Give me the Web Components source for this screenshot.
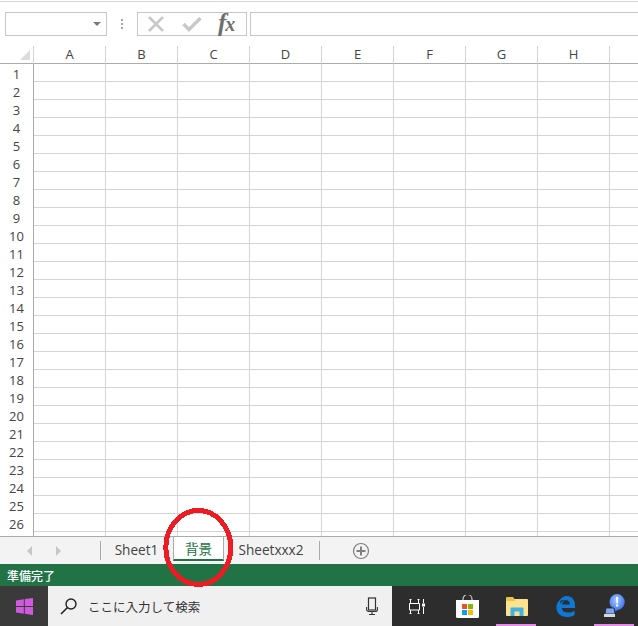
<!DOCTYPE html>
<html lang="ja"><head><meta charset="utf-8"><title>Sheet</title>
<style>html,body{margin:0;padding:0;background:#fff;overflow:hidden}</style></head>
<body>
<x-app>
  <x-formula-bar></x-formula-bar>
  <x-sheet rows="27" cols="ABCDEFGH"></x-sheet>
  <x-tabs>
    <x-tab slot="tabs" style="width:72px">Sheet1</x-tab>
    <x-tab slot="tabs" active style="width:51px">背景</x-tab>
    <x-tab slot="tabs" style="width:95px">Sheetxxx2</x-tab>
  </x-tabs>
  <x-status>準備完了</x-status>
  <x-taskbar></x-taskbar>
</x-app>
<script>
const FONT='"Open Sans","Noto Sans","Noto Sans CJK JP",sans-serif';
class Base extends HTMLElement{
  constructor(){super();this.attachShadow({mode:'open'});}
}
customElements.define('x-app',class extends Base{
  connectedCallback(){this.shadowRoot.innerHTML=`<style>
  :host{display:flex;flex-direction:column;position:relative;width:638px;height:626px;overflow:hidden;font-family:${FONT};color:#444}
  svg{position:absolute;left:160px;top:504px;width:76px;height:86px}
  </style><slot></slot>
  <svg viewBox="0 0 76 86" shape-rendering="crispEdges"><ellipse cx="38.3" cy="43.5" rx="32.500" ry="37" fill="none" stroke="#ed1c24" stroke-width="5"/></svg>`;}
});
customElements.define('x-formula-bar',class extends Base{
  connectedCallback(){this.shadowRoot.innerHTML=`<style>
  :host{display:flex;box-sizing:border-box;height:46px;flex:none;background:#fff;position:relative;padding:12px 0 0 5px;align-items:flex-start}
  .line{position:absolute;left:0;right:0;top:1px;height:1px;background:#d6d6d6}
  .box{box-sizing:border-box;height:24px;border:1px solid #c6c6c6;background:#fff;flex:none}
  .name{width:102px;display:flex;align-items:center;justify-content:flex-end;padding-right:5px}
  .dots{width:30px;height:24px;display:flex;flex-direction:column;align-items:center;justify-content:center;gap:2px;flex:none}
  .dots i{width:2px;height:2px;background:#a6a6a6;display:block}
  .btns{width:110px;display:flex;align-items:center;position:relative}
  .fx{position:absolute;left:80px;top:-4px;font:italic bold 25px/28px "Liberation Serif",serif;color:#6e6e6e;letter-spacing:-1px}
  .fx b{font-size:20px}
  .input{flex:1;margin-left:3px;border-right:none}
  svg{display:block;flex:none}
  </style><div class="line"></div>
  <div class="box name"><svg width="8" height="4"><path d="M0 0h8L4 4z" fill="#7a7a7a"/></svg></div>
  <div class="dots"><i></i><i></i><i></i></div>
  <div class="box btns">
    <svg style="margin-left:9px" width="18" height="16" viewBox="0 0 18 16"><path d="M2 1l14 14M16 1L2 15" stroke="#c8c8c8" stroke-width="2.600" fill="none"/></svg>
    <svg style="margin-left:17px" width="20" height="16" viewBox="0 0 20 16"><path d="M1.500 8l5.500 5.500L18.500 2" stroke="#c8c8c8" stroke-width="3.400" fill="none"/></svg>
    <span class="fx">f<b>x</b></span>
  </div>
  <div class="box input"></div>`;}
});
customElements.define('x-sheet',class extends Base{
  connectedCallback(){
    const cols=this.getAttribute('cols').split(''),rows=+this.getAttribute('rows');
    let h=`<div class="corner"><svg width="10" height="10"><path d="M10 0v10H0z" fill="#dcdcdc"/></svg></div>`;
    for(const c of cols)h+=`<div class="ch">${c}</div>`;
    h+=`<div class="ch"></div>`;
    for(let r=1;r<=rows;r++){
      h+=`<div class="rh">${r<27?r:''}</div>`;
      for(let i=0;i<=cols.length;i++)h+=`<div class="c"></div>`;
    }
    this.shadowRoot.innerHTML=`<style>
    :host{display:block;height:490px;flex:none;overflow:hidden;background:#fff}
    .g{display:grid;grid-template-columns:34px repeat(9,72px);grid-template-rows:18px repeat(27,18px);width:682px}
    .corner{display:flex;align-items:flex-end;justify-content:flex-end;padding:0 3px 3px 0;box-sizing:border-box;border-bottom:1px solid #ababab;border-right:1px solid #d4d4d4}
    .ch{box-sizing:border-box;border-right:1px solid #d4d4d4;border-bottom:1px solid #ababab;font-size:13px;line-height:16px;text-align:center;color:#444}
    .rh{box-sizing:border-box;border-right:1px solid #ababab;font-size:13px;line-height:18px;text-align:center;padding-top:1px;color:#444;white-space:nowrap}
    .c{box-sizing:border-box;border-right:1px solid #d4d4d4;border-bottom:1px solid #d4d4d4}
    </style><div class="g">${h}</div>`;
  }
});
customElements.define('x-tab',class extends Base{
  connectedCallback(){const a=this.hasAttribute('active');this.shadowRoot.innerHTML=`<style>
  :host{display:flex;box-sizing:border-box;height:24px;align-items:center;justify-content:center;font-size:13.6px;color:${a?'#217346':'#444'};flex:none;position:relative;padding-right:1px}
  :host([active]){background:#fff;border-left:1px solid #ababab;border-right:1px solid #ababab;border-bottom:2px solid #217346;padding:0}
  </style><slot></slot>`;}
});
customElements.define('x-tabs',class extends Base{
  connectedCallback(){this.shadowRoot.innerHTML=`<style>
  :host{display:flex;box-sizing:border-box;height:28px;flex:none;background:#f3f3f3;border-top:1px solid #ababab;align-items:flex-start}
  .nav{width:100px;height:27px;display:flex;align-items:center;gap:24px;padding-left:27px;box-sizing:border-box;flex:none}
  .sep{width:1px;height:19px;background:#ababab;margin-top:4px;flex:none}
  .list{display:flex}
  .plus{margin:5px 0 0 32px;flex:none;display:block}
  svg{display:block}
  </style>
  <div class="nav"><svg width="5" height="10"><path d="M5 0v10L0 5z" fill="#c6c6c6"/></svg><svg width="5" height="10"><path d="M0 0v10l5-5z" fill="#c6c6c6"/></svg></div>
  <div class="sep"></div>
  <div class="list"><slot name="tabs"></slot></div>
  <div class="sep"></div>
  <svg class="plus" width="18" height="18" viewBox="0 0 18 18"><circle cx="9" cy="9" r="7.500" fill="none" stroke="#7f7f7f" stroke-width="1.200"/><path d="M9 4.500v9M4.500 9h9" stroke="#7f7f7f" stroke-width="2"/></svg>`;}
});
customElements.define('x-status',class extends Base{
  connectedCallback(){this.shadowRoot.innerHTML=`<style>
  :host{display:flex;align-items:center;box-sizing:border-box;height:22px;flex:none;background:#217346;color:#fff;padding-left:7px;font-size:12px;font-weight:500;font-family:"Noto Sans CJK JP",sans-serif}
  </style><slot></slot>`;}
});
customElements.define('x-taskbar',class extends Base{
  connectedCallback(){this.shadowRoot.innerHTML=`<style>
  :host{display:flex;height:40px;flex:none;background:#2d2d2d;align-items:stretch}
  .start{width:48px;background:#3a3a3a;display:flex;align-items:center;justify-content:center;flex:none}
  .search{width:344px;background:#f0f0f0;display:flex;align-items:center;box-sizing:border-box;padding-left:12px;flex:none;color:#333;font:12.500px "Noto Sans CJK JP",sans-serif}
  .search span{margin-left:10px;flex:1}
  .mic{margin-right:14px}
  .app{width:49px;flex:none;display:flex;align-items:center;justify-content:center;box-sizing:border-box;position:relative}
  .app.on::after{content:"";position:absolute;left:4px;right:5px;bottom:0;height:2px;background:#e58ce8}
  svg{display:block;flex:none}
  </style>
  <div class="start"><svg width="17" height="17" viewBox="0 0 17 17"><path d="M0 2.400L7.800 1.200V8H0zM8.800 1.100L17 0V8H8.800zM0 9h7.800v6.800L0 14.600zM8.800 9H17v8l-8.200-1.200z" fill="#cf5bdc"/></svg></div>
  <div class="search">
    <svg width="18" height="18" viewBox="0 0 18 18"><circle cx="11" cy="7" r="5" fill="none" stroke="#222" stroke-width="1.400"/><path d="M7.500 10.500L1 17" stroke="#222" stroke-width="1.600"/></svg>
    <span>ここに入力して検索</span>
    <svg class="mic" width="12" height="18" viewBox="0 0 12 18"><rect x="2.500" y="1" width="7" height="12" fill="none" stroke="#333" stroke-width="1.200"/><path d="M.6 10v2.500a2 2 0 0 0 2 2h6.800a2 2 0 0 0 2-2V10M6 14.500V17.500M3 17.500h6" fill="none" stroke="#333" stroke-width="1.100"/></svg>
  </div>
  <div class="app" style="width:50px"><svg width="16" height="15" viewBox="0 0 16 15"><path d="M.5 4.500h10v6.500H.5zM1.500 0v4.500M9.500 0v4.500M1.500 11V15M9.500 11V15M.5 .5h2M8.500 .5h2M.5 14.500h2M8.500 14.500h2M14.500 0v4M14.500 8v7" fill="none" stroke="#fff" stroke-width="1"/><rect x="13" y="4.500" width="3" height="3" fill="#fff"/></svg></div>
  <div class="app" style="width:50px"><svg width="23" height="23" viewBox="0 0 23 23"><path d="M7 6V4a4.500 4.500 0 0 1 9 0V6" fill="none" stroke="#ccc" stroke-width="1.200"/><path d="M0 5h23v16.500a1.500 1.500 0 0 1-1.500 1.500h-20A1.500 1.500 0 0 1 0 21.500z" fill="#fff"/><rect x="6" y="9" width="5" height="5" fill="#f25022"/><rect x="12" y="9" width="5" height="5" fill="#7fba00"/><rect x="6" y="15" width="5" height="5" fill="#00a4ef"/><rect x="12" y="15" width="5" height="5" fill="#ffb900"/></svg></div>
  <div class="app on" style="width:49px"><svg width="22" height="19" viewBox="0 0 22 19"><path d="M0 2h21a1 1 0 0 1 1 1v15a1 1 0 0 1-1 1H1a1 1 0 0 1-1-1z" fill="#fce28f"/><path d="M0 1a1 1 0 0 1 1-1h6l1.500 2L9 4H0z" fill="#e8c54a"/><path d="M4.500 19v-7.500a1 1 0 0 1 1-1h11a1 1 0 0 1 1 1V19h-4v-4.500H8.500V19z" fill="#3fb1e5"/></svg></div>
  <div class="app" style="width:49px"><svg width="21" height="21" viewBox="0 0 21 22"><path d="M20.500 12.500H6.500c.4 3.200 3 4.900 6 4.900 2.900 0 5.500-.8 7.500-2.300v4.700c-2.200 1.400-5 2.200-8.200 2.200-5.900 0-10.800-3.800-10.800-9.300C1 7.800 3.500 4.300 7 3 5.500 4.500 4.800 6.200 4.800 8.200 6.200 5.800 9.300 4.300 12.500 4.300c-2.200 0-5 1.500-5.800 4.500h8.300c0-2.600-1.700-4.400-4.800-4.500C7.500 4 5 5 3.500 6.500 5 2.500 8 0 11.800 0c5.500 0 8.700 4.300 8.700 10z" fill="#0f78d4"/></svg></div>
  <div class="app on" style="width:49px"><svg width="21" height="24" viewBox="0 0 21 24"><defs><radialGradient id="b" cx=".45" cy=".35" r=".7"><stop offset="0" stop-color="#a9c8ff"/><stop offset="1" stop-color="#2563e8"/></radialGradient></defs><path d="M13 0a8 8 0 0 1 1.500 15.800L10 18l.8-2.500A8 8 0 0 1 13 0z" fill="url(#b)"/><path d="M12 3h2.200l-.4 6.500h-1.400zM12 10.500h2.200v2H12z" fill="#fff"/><path d="M2 14h8l1 6H1z" fill="#7ea6ec" stroke="#222" stroke-width=".8"/><rect x="0" y="20" width="11" height="3" fill="#d8d8d8"/></svg></div>`;}
});
</script>
</body></html>
